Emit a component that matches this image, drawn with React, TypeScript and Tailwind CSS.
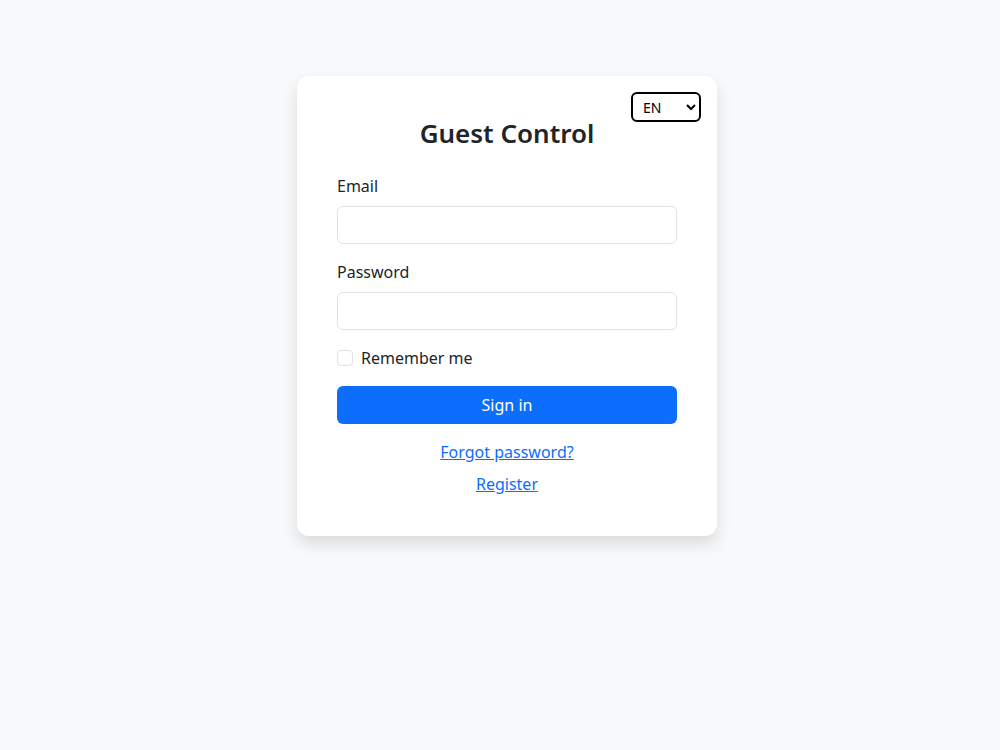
import React from "react";

export default function App() {
  return (
    <div
      className="flex min-h-[750px] w-full items-start justify-center bg-[#f8f9fa] pl-[14px] pt-[76px] text-[#212529]"
      style={{ fontFamily: '"Segoe UI", "Noto Sans", "Open Sans", sans-serif' }}
    >
      <div className="relative w-[420px] rounded-xl bg-white p-10 shadow-[0_0.5rem_1rem_rgba(0,0,0,0.12)]">
        <select
          defaultValue="EN"
          className="absolute right-4 top-4 h-[30px] w-[70px] rounded-md border-2 border-black bg-white pl-[6px] text-sm text-black"
        >
          <option value="EN">EN</option>
          <option value="ES">ES</option>
        </select>
        <h3 className="mb-6 pt-px text-center text-[26px] font-semibold leading-[33px]">Guest Control</h3>
        <form>
          <div className="mb-4">
            <label className="mb-2 block text-base leading-6">Email</label>
            <input
              type="email"
              className="block h-[38px] w-full rounded-md border border-[#dee2e6] px-3 text-base"
            />
          </div>
          <div className="mb-4">
            <label className="mb-2 block text-base leading-6">Password</label>
            <input
              type="password"
              className="block h-[38px] w-full rounded-md border border-[#dee2e6] px-3 text-base"
            />
          </div>
          <div className="mb-4 flex h-6 items-center">
            <span className="inline-block h-4 w-4 rounded border border-[#dee2e6] bg-white" />
            <span className="ml-2 text-base leading-6">Remember me</span>
          </div>
          <button
            type="button"
            className="block h-[38px] w-full rounded-md bg-[#0d6efd] text-base text-white"
          >
            Sign in
          </button>
          <div className="mt-4 text-center leading-6">
            <a href="#" className="text-[#0d6efd] underline">Forgot password?</a>
          </div>
          <div className="mt-2 text-center leading-6">
            <a href="#" className="text-[#0d6efd] underline">Register</a>
          </div>
        </form>
      </div>
    </div>
  );
}
